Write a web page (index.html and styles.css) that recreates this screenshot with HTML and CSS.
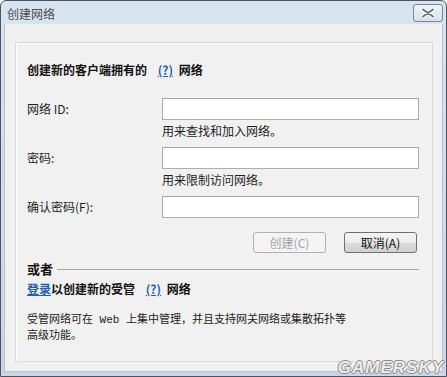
FILE: index.html
```html
<!DOCTYPE html>
<html>
<head>
<meta charset="UTF-8">
<title>创建网络</title>
<link rel="stylesheet" href="styles.css">
</head>
<body>
<div class="window">
  <div class="titlebar">
    <span class="title">创建网络</span>
    <div class="close">
      <svg width="14" height="10" viewBox="0 0 14 10">
        <path d="M2 1.5 L12 8.5 M12 1.5 L2 8.5" stroke="#fff" stroke-width="4" stroke-linecap="round"/>
        <path d="M2 1.5 L12 8.5 M12 1.5 L2 8.5" stroke="#68717d" stroke-width="2" stroke-linecap="round"/>
      </svg>
    </div>
  </div>
  <div class="client">
    <div class="group">
      <p class="head">创建新的客户端拥有的 <a class="help">(?)</a> 网络</p>

      <div class="fields">
        <div class="row">
          <span class="lbl">网络 ID:</span>
          <div class="field">
            <div class="box"></div>
            <p class="hint">用来查找和加入网络。</p>
          </div>
        </div>
        <div class="row">
          <span class="lbl">密码:</span>
          <div class="field">
            <div class="box"></div>
            <p class="hint">用来限制访问网络。</p>
          </div>
        </div>
        <div class="row">
          <span class="lbl">确认密码(F):</span>
          <div class="field">
            <div class="box"></div>
          </div>
        </div>
      </div>

      <div class="buttons">
        <div class="btn off">创建(C)</div>
        <div class="btn">取消(A)</div>
      </div>

      <div class="or"><span>或者</span><i></i></div>
      <p class="head login"><a class="link">登录</a>以创建新的受管 <a class="help">(?)</a> 网络</p>

      <p class="desc">受管网络可在 Web 上集中管理，并且支持网关网络或集散拓扑等<br>高级功能。</p>
    </div>
  </div>
  <div class="mark">GAMERSKY</div>
</div>
</body>
</html>
```

FILE: styles.css
```css
body{
    margin:0;
    background:#fff;
    font-family:"Noto Sans CJK SC", "Liberation Sans", sans-serif;
    font-size:12px;
    color:#1e1e1e;
}
p{
    margin:0;
}
.window{
    position:relative;
    width:447px;
    height:377px;
    box-sizing:border-box;
    border:1px solid #4f545c;
    border-radius:6px 6px 0 0;
    background:linear-gradient(#d9e4f1, #c9d6e5);
    display:flex;
    flex-direction:column;
    overflow:hidden;
}
.titlebar{
    height:23px;
    display:flex;
    align-items:flex-start;
    justify-content:space-between;
    flex-shrink:0;
}
.title{
    margin:4px 0 0 6px;
    font-size:12px;
    line-height:17px;
    color:#4a4a4a;
}
.close{
    margin:3px 3px 0 0;
    width:30px;
    height:18px;
    box-sizing:border-box;
    border:1px solid #7a8799;
    border-radius:3px;
    background:linear-gradient(#eef3f9, #d6e0ec);
    display:flex;
    align-items:center;
    justify-content:center;
}
.client{
    flex:1;
    margin:0 3px 4px 3px;
    padding:18px 9px 9px 10px;
    background:#f0f0f0;
    border:1px solid #b5c2d1;
    border-top:none;
}
.group{
    height:320px;
    box-sizing:border-box;
    border:1px solid #d9d9d9;
    box-shadow:inset 1px 1px 0 #fff;
    background:#f1f1f1;
    padding:19px 13px 0 11px;
}
.head{
    font-weight:bold;
    line-height:16px;
    color:#111;
}
.help, .link{
    color:#1a5fb4;
    text-decoration:underline;
    margin:0 3px 0 8px;
}
.link{
    margin:0;
}
.fields{
    margin-top:20px;
}
.row{
    display:grid;
    grid-template-columns:135px 1fr;
    margin-top:8px;
}
.row:first-child{
    margin-top:0;
}
.lbl{
    line-height:22px;
}
.box{
    height:22px;
    box-sizing:border-box;
    border:1px solid #abadb3;
    border-top-color:#a0a3aa;
    background:#fff;
}
.hint{
    margin-top:3px;
    line-height:16px;
}
.buttons{
    margin-top:14px;
    padding-right:2px;
    display:flex;
    justify-content:flex-end;
    gap:18px;
}
.btn{
    width:73px;
    height:21px;
    box-sizing:border-box;
    border:1px solid #707070;
    border-radius:3px;
    background:linear-gradient(#f4f4f4 0%, #ebebeb 50%, #dddddd 51%, #cfcfcf 100%);
    text-align:center;
    line-height:19px;
    color:#111;
}
.btn.off{
    border-color:#adb2b5;
    background:#f4f4f4;
    color:#a3a3a3;
}
.or{
    margin-top:8px;
    display:flex;
    align-items:center;
    line-height:16px;
}
.or span{
    font-weight:bold;
    font-size:13px;
    color:#111;
}
.or i{
    flex:1;
    height:1px;
    margin-left:4px;
    background:#a8a8a8;
}
.login{
    margin-top:4px;
}
.desc{
    margin-top:15px;
    font-family:"Liberation Mono", "Noto Sans CJK SC", monospace;
    font-size:11px;
    line-height:16px;
    color:#222;
}
.mark{
    position:absolute;
    right:2px;
    bottom:-2px;
    font-family:"Liberation Sans", sans-serif;
    font-weight:bold;
    font-style:italic;
    font-size:17px;
    letter-spacing:1px;
    color:#ececec;
    text-shadow:1px 0 #8c8c8c, -1px 0 #8c8c8c, 0 1px #8c8c8c, 0 -1px #8c8c8c;
}
```
